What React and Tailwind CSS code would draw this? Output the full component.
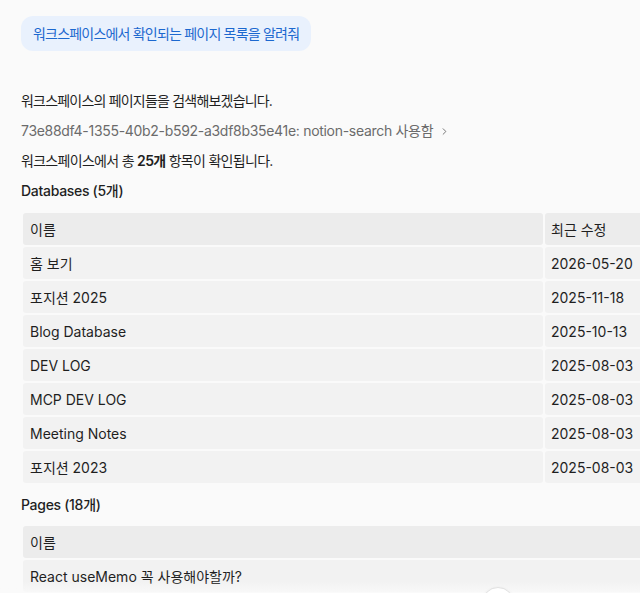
import { ChevronRight, ArrowDown } from "lucide-react";

const databases = [
  { name: "홈 보기", date: "2026-05-20" },
  { name: "포지션 2025", date: "2025-11-18" },
  { name: "Blog Database", date: "2025-10-13" },
  { name: "DEV LOG", date: "2025-08-03" },
  { name: "MCP DEV LOG", date: "2025-08-03" },
  { name: "Meeting Notes", date: "2025-08-03" },
  { name: "포지션 2023", date: "2025-08-03" },
];

const pages = [{ name: "React useMemo 꼭 사용해야할까?" }];

const App = () => {
  return (
    <div
      className="relative h-[593px] overflow-hidden bg-[#fafafa] text-[14px] text-[#1f1f1f]"
      style={{ fontFamily: 'Inter, "Noto Sans CJK KR", sans-serif' }}
    >
      <div className="pl-[21px] pt-[16px]">
        {/* User bubble */}
        <div className="inline-block rounded-xl bg-[#e9f1fd] px-[12px] py-[8px] leading-[19px] tracking-[-0.8px] text-[#1c68cf]">
          워크스페이스에서 확인되는 페이지 목록을 알려줘
        </div>

        {/* Answer */}
        <div className="mt-[40px] leading-[20px]">
          <p className="tracking-[-0.8px]">워크스페이스의 페이지들을 검색해보겠습니다.</p>
          <div className="mt-[10px] flex items-center gap-[6px] tracking-[-0.3px] text-[#6b6b6b]">
            <span>73e88df4-1355-40b2-b592-a3df8b35e41e: notion-search 사용함</span>
            <ChevronRight className="h-[11px] w-[11px]" strokeWidth={2} />
          </div>
          <p className="mt-[10px] tracking-[-0.7px]">
            워크스페이스에서 총 <span className="font-semibold">25개</span> 항목이 확인됩니다.
          </p>
          <p className="mt-[10px] font-medium tracking-[-0.3px]">Databases (5개)</p>
        </div>

        {/* Databases table */}
        <table className="mt-[10px] table-fixed border-separate border-spacing-[2px] w-[680px]">
          <colgroup>
            <col className="w-[520px]" />
            <col />
          </colgroup>
          <thead>
            <tr className="h-[32px]">
              <th className="rounded-[3px] bg-[#ececec] px-[7px] text-left font-normal">이름</th>
              <th className="rounded-[3px] bg-[#ececec] px-[6px] text-left font-normal">최근 수정</th>
            </tr>
          </thead>
          <tbody>
            {databases.map((row) => (
              <tr key={row.name} className="h-[32px]">
                <td className="rounded-[3px] bg-[#f2f2f2] px-[7px]">{row.name}</td>
                <td className="rounded-[3px] bg-[#f2f2f2] px-[6px]">{row.date}</td>
              </tr>
            ))}
          </tbody>
        </table>

        <p className="mt-[10px] font-medium leading-[20px] tracking-[-0.3px]">Pages (18개)</p>

        {/* Pages table */}
        <table className="mt-[9px] table-fixed border-separate border-spacing-[2px] w-[680px]">
          <thead>
            <tr className="h-[32px]">
              <th className="rounded-[3px] bg-[#ececec] px-[7px] text-left font-normal">이름</th>
            </tr>
          </thead>
          <tbody>
            {pages.map((row) => (
              <tr key={row.name} className="h-[32px]">
                <td className="rounded-[3px] bg-[#f2f2f2] px-[7px]">{row.name}</td>
              </tr>
            ))}
          </tbody>
        </table>
      </div>

      {/* Bottom fade */}
      <div className="pointer-events-none absolute inset-x-0 bottom-0 h-[12px] bg-gradient-to-b from-[#fafafa]/0 to-[#fafafa]/80" />

      {/* Scroll down button */}
      <button className="absolute left-[482px] top-[587px] flex h-[32px] w-[32px] items-center justify-center rounded-full border border-[#e2e2e2] bg-white shadow-sm">
        <ArrowDown className="h-4 w-4 text-[#555]" />
      </button>
    </div>
  );
};

export default App;
